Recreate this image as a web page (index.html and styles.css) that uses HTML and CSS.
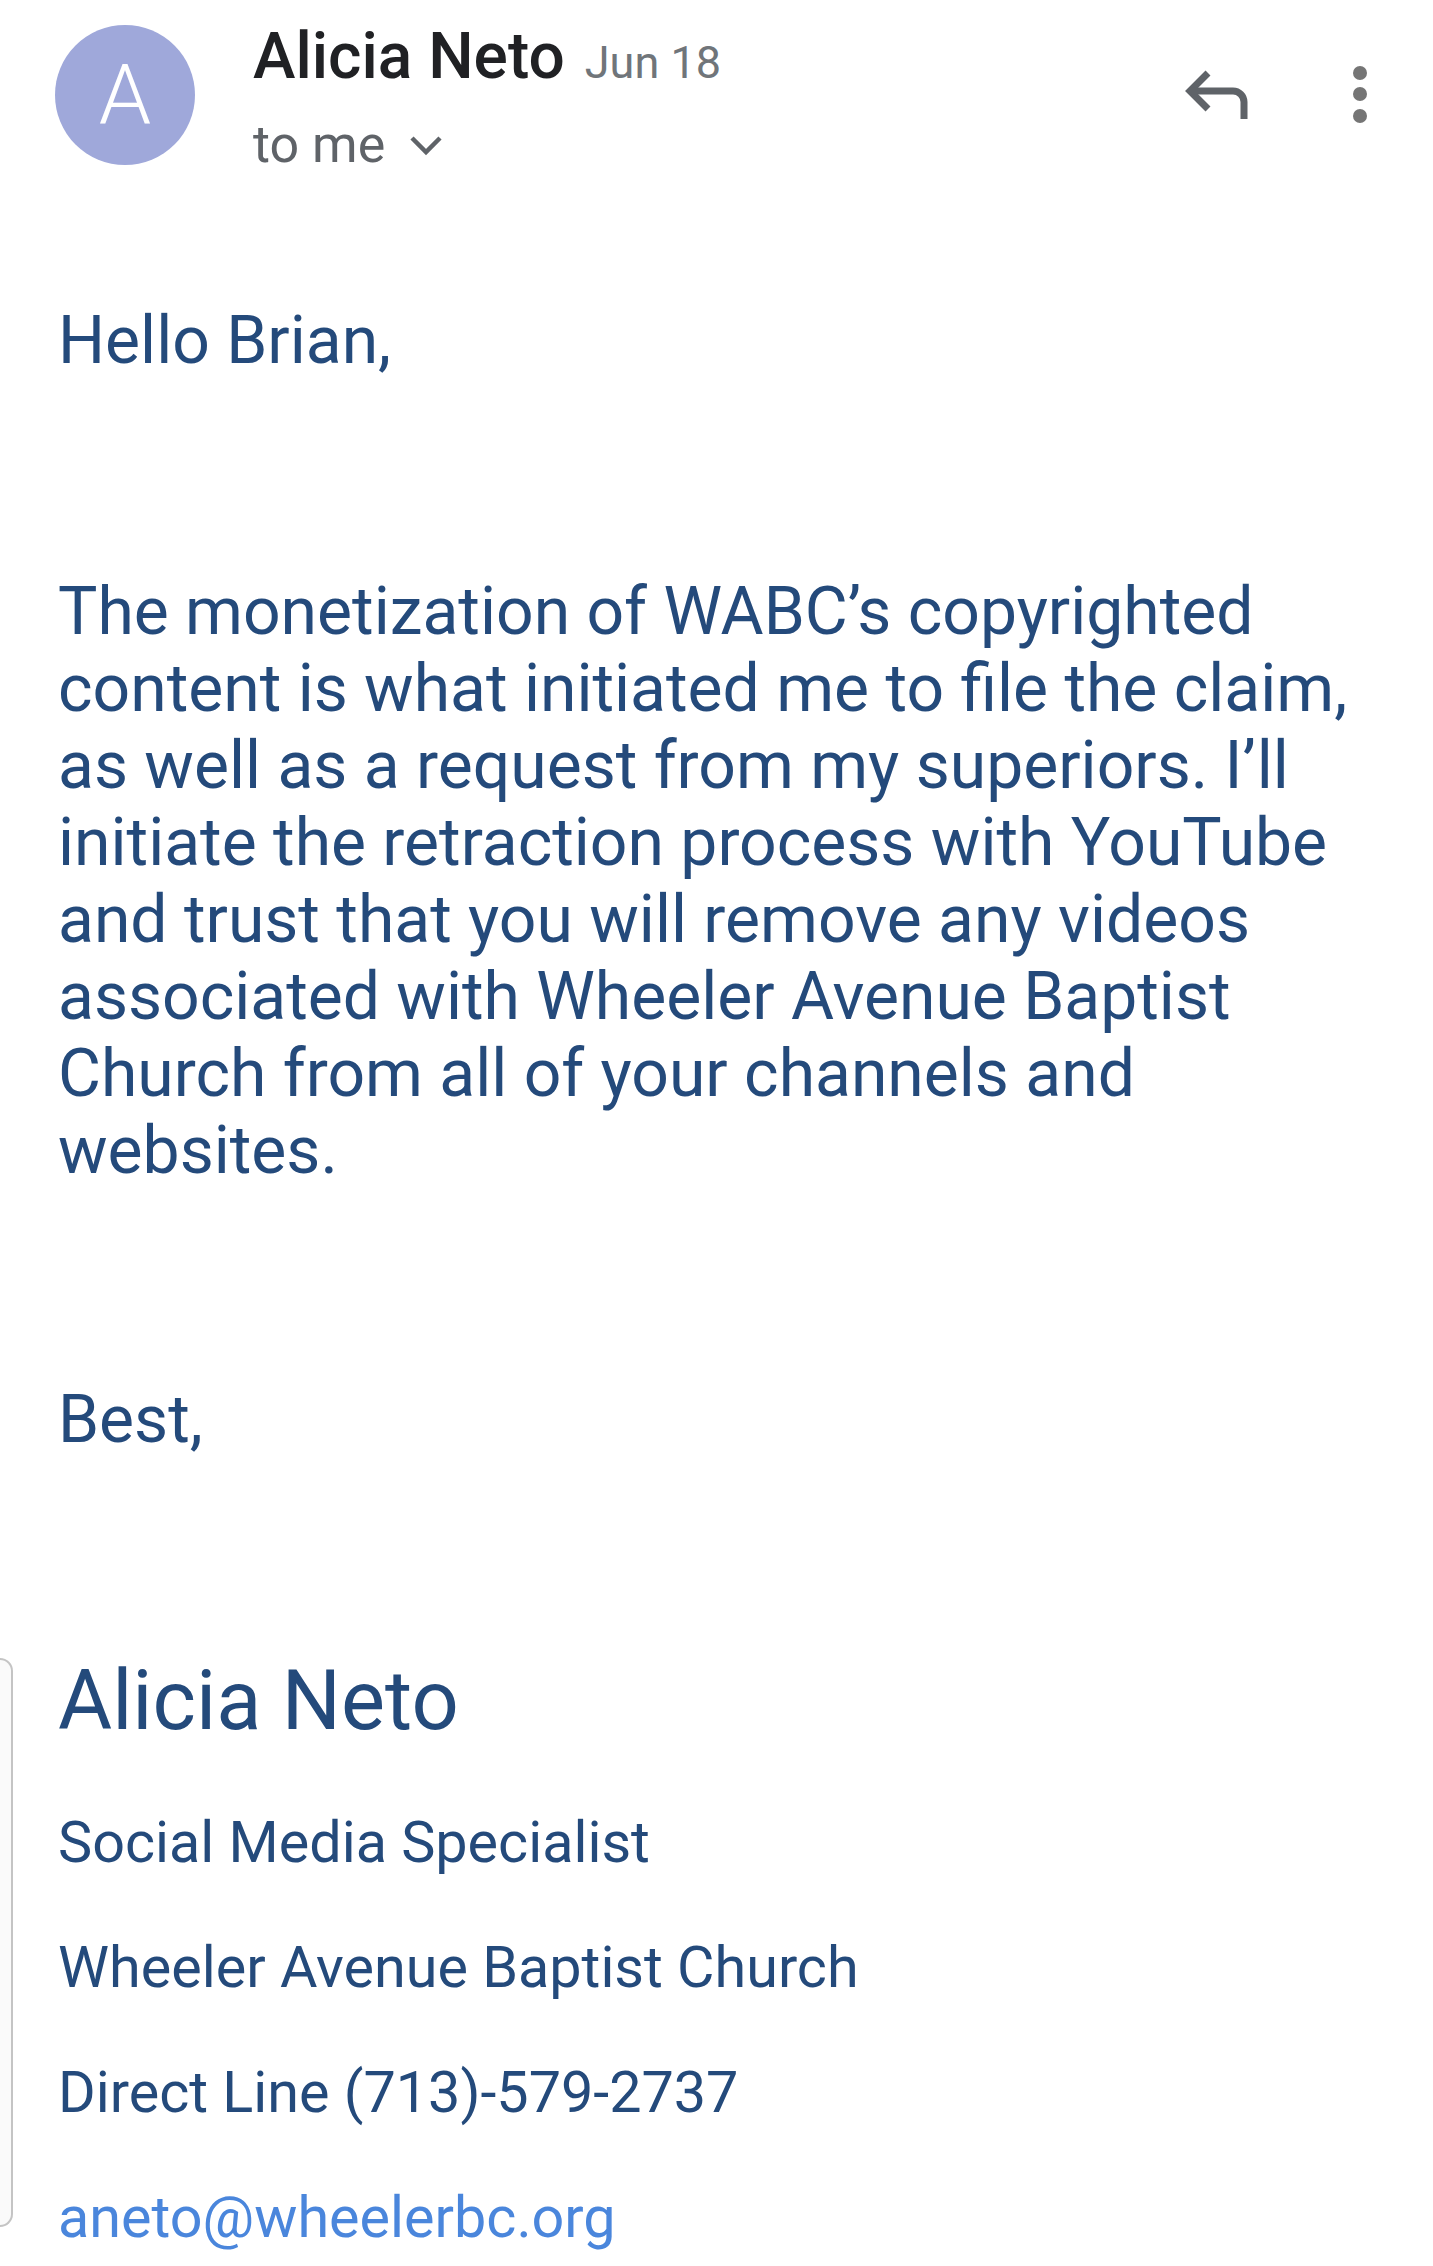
FILE: index.html
```html
<!DOCTYPE html>
<html lang="en">
<head>
    <meta charset="UTF-8">
    <meta name="viewport" content="width=device-width, initial-scale=1.0">
    <title>Alicia Neto - Mail</title>
    <link rel="stylesheet" href="styles.css">
</head>
<body>
    <div class="mail-header">
        <div class="avatar">A</div>
        <div class="sender">
            <div class="sender-line">
                <span class="sender-name">Alicia Neto</span>
                <span class="sender-date">Jun 18</span>
            </div>
            <div class="recipient">
                to me
                <svg class="chevron" width="34" height="22" viewBox="0 0 34 22">
                    <polyline points="3,3 17,17 31,3" fill="none" stroke="#5f6368" stroke-width="4.5"/>
                </svg>
            </div>
        </div>
        <div class="actions">
            <svg class="reply-icon" width="66" height="64" viewBox="0 0 66 64">
                <path d="M25 11 L7 29 L25 47" fill="none" stroke="#5f6368" stroke-width="7" stroke-linejoin="miter"/>
                <path d="M7 29 H50 a11 11 0 0 1 11 11 V57" fill="none" stroke="#5f6368" stroke-width="7"/>
            </svg>
            <svg class="more-icon" width="20" height="62" viewBox="0 0 20 62">
                <circle cx="10" cy="9" r="7" fill="#757575"/>
                <circle cx="10" cy="30" r="7" fill="#757575"/>
                <circle cx="10" cy="52" r="7" fill="#757575"/>
            </svg>
        </div>
    </div>

    <div class="mail-body">
        <p class="greeting">Hello Brian,</p>
        <p class="message">The monetization of WABC’s copyrighted content is what initiated me to file the claim, as well as a request from my superiors. I’ll initiate the retraction process with YouTube and trust that you will remove any videos associated with Wheeler Avenue Baptist Church from all of your channels and websites.</p>
        <p class="closing">Best,</p>
    </div>

    <div class="signature">
        <div class="sig-edge"></div>
        <div class="sig-content">
            <div class="sig-name">Alicia Neto</div>
            <div class="sig-line">Social Media Specialist</div>
            <div class="sig-line">Wheeler Avenue Baptist Church</div>
            <div class="sig-line">Direct Line (713)-579-2737</div>
            <a class="sig-line sig-mail" href="mailto:aneto@wheelerbc.org">aneto@wheelerbc.org</a>
        </div>
    </div>
</body>
</html>
```

FILE: styles.css
```css
body {
    margin: 0;
    font-family: Roboto, 'Liberation Sans', sans-serif;
    background-color: #ffffff;
    color: #244a7b;
}

.mail-header {
    display: flex;
    align-items: flex-start;
    padding: 19px 63px 0 55px;
}

.avatar {
    width: 140px;
    height: 140px;
    margin-top: 6px;
    border-radius: 50%;
    background-color: #9fa8da;
    color: white;
    font-size: 84px;
    font-weight: 300;
    display: flex;
    justify-content: center;
    align-items: center;
    flex-shrink: 0;
}

.sender {
    margin-left: 58px;
}

.sender-line {
    display: flex;
    align-items: baseline;
    line-height: 75px;
}

.sender-name {
    font-size: 64px;
    font-weight: 500;
    color: #202124;
}

.sender-date {
    font-size: 45px;
    color: #70757a;
    margin-left: 20px;
}

.recipient {
    display: flex;
    align-items: center;
    font-size: 52px;
    color: #5f6368;
    line-height: 61px;
    margin-top: 14px;
}

.chevron {
    margin-left: 24px;
    margin-top: 2px;
}

.actions {
    margin-left: auto;
    display: flex;
    align-items: flex-start;
    padding-top: 43px;
}

.more-icon {
    margin-left: 101px;
    margin-top: 2px;
}

.mail-body {
    padding: 0 58px;
}

.mail-body p {
    margin: 0;
    font-size: 66px;
    line-height: 77px;
}

.greeting {
    padding-top: 127px;
}

.message {
    margin-top: 194px !important;
}

.closing {
    margin-top: 192px !important;
}

.signature {
    display: flex;
    margin-top: 194px;
}

.sig-edge {
    width: 11px;
    margin: 6px 0 24px 0;
    border: 2px solid #c4c4c4;
    border-left: none;
    border-radius: 0 14px 14px 0;
    background-color: #fafafa;
    flex-shrink: 0;
}

.sig-content {
    margin-left: 45px;
    display: flex;
    flex-direction: column;
    align-items: flex-start;
}

.sig-name {
    font-size: 83px;
    line-height: 97px;
}

.sig-line {
    font-size: 57.5px;
    line-height: 67px;
    margin-top: 58px;
}

.sig-name + .sig-line {
    margin-top: 60px;
}

.sig-mail {
    color: #4a86dc;
    text-decoration: none;
}
```
